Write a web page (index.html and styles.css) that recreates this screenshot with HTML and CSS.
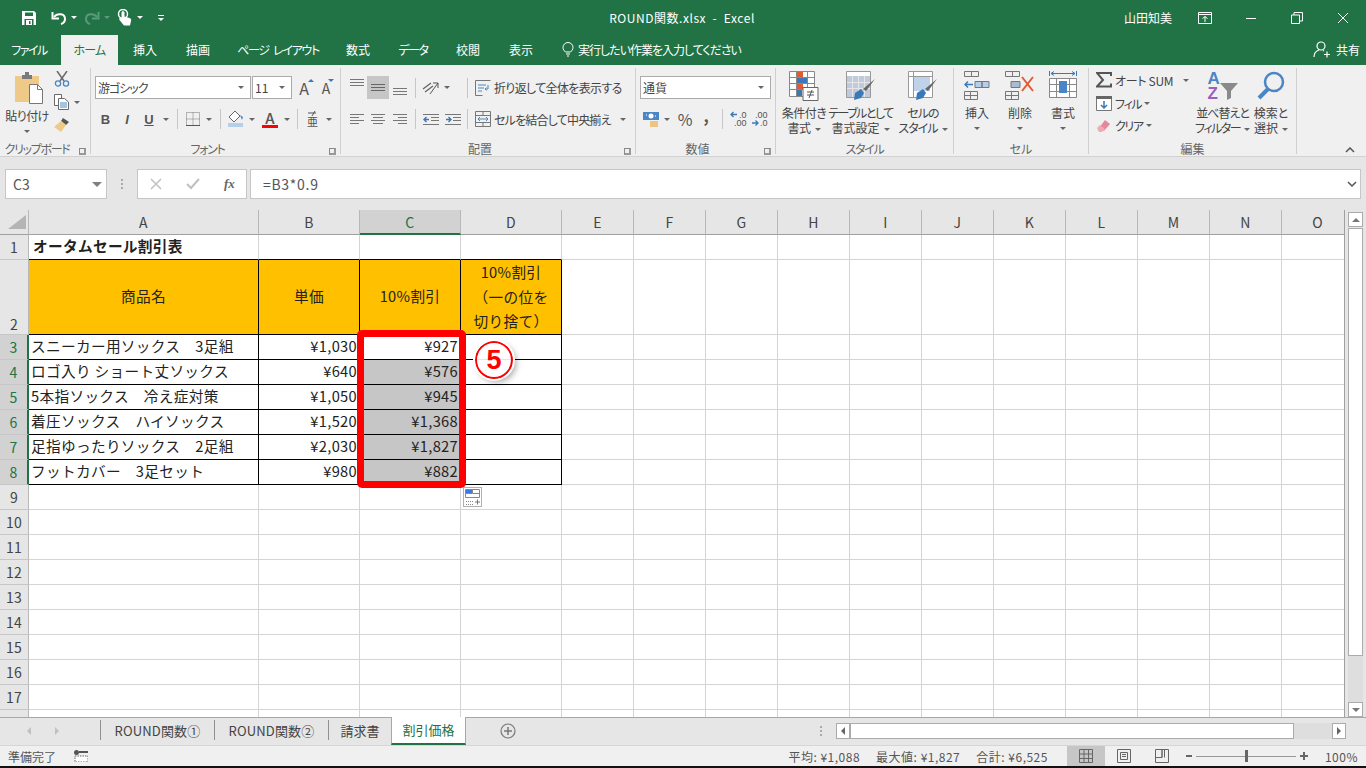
FILE: index.html
```html
<!DOCTYPE html>
<html lang="ja">
<head>
<meta charset="utf-8">
<title>ROUND関数.xlsx - Excel</title>
<link rel="stylesheet" href="styles.css">
</head>
<body>
<div class="app">

<header class="titlebar">
  <div class="qat">
    <svg class="i w16" viewBox="0 0 16 16"><path d="M1 1h12l2 2v12H1z" fill="#fff"/><path d="M4 2.500h8v3.500H4zM3.500 9h9v6h-9z" fill="#217346"/><path d="M5 10h6v5H5z" fill="#fff"/><path d="M8 11h1.500v3H8z" fill="#217346"/></svg>
    <span class="s w14"></span>
    <svg class="i w16" viewBox="0 0 16 16"><path d="M3 7c3-4 11-4 11 2 0 2-1 4-4 5" fill="none" stroke="#fff" stroke-width="2"/><path d="M1.500 2v6.500H8" fill="none" stroke="#fff" stroke-width="2"/></svg>
    <span class="s w14"><i class="car wh"></i></span>
    <svg class="i w16 ml3" viewBox="0 0 16 16"><path d="M13 7C10 3 2 3 2 9c0 2 1 4 4 5" fill="none" stroke="#5c9a7c" stroke-width="2"/><path d="M14.500 2v6.500H8" fill="none" stroke="#5c9a7c" stroke-width="2"/></svg>
    <span class="s w14"><i class="car dim"></i></span>
    <svg class="i w16 ml3" viewBox="0 0 16 18"><circle cx="6" cy="5" r="4.500" fill="none" stroke="#fff" stroke-width="1.500"/><path d="M4.500 3.500c0-1.800 3-1.800 3 0v4l5 1.500c1.500.5 2 1.500 1.500 3l-1 4.500H7L2.500 11c-1-1.500.5-2.500 2-1.500z" fill="#fff"/></svg>
    <span class="s w14"><i class="car wh"></i></span>
    <span class="s w10"></span>
    <span class="s w8 cust"><i class="cust-bar"></i><i class="car wh"></i></span>
  </div>
  <div class="doc">ROUND関数.xlsx &nbsp;-&nbsp; Excel</div>
  <div class="winctl">
    <span class="user">山田知美</span>
    <span class="wb"><svg class="i w14" viewBox="0 0 14 12"><path d="M.5.500h13v11H.500zM.5 2.500h13" fill="none" stroke="#fff"/><path d="M7 10V4.500M4.500 6.500 7 4.500l2.500 2" fill="none" stroke="#fff"/></svg></span>
    <span class="wb"><svg class="i w12" viewBox="0 0 12 12"><path d="M1 6.500h10" stroke="#fff"/></svg></span>
    <span class="wb"><svg class="i w12" viewBox="0 0 12 12"><path d="M.5 3h8v8.500h-8zM3 3V.5h8.500V9H8.500" fill="none" stroke="#fff"/></svg></span>
    <span class="wb"><svg class="i w12" viewBox="0 0 12 12"><path d="M1 1l10 10M11 1 1 11" stroke="#fff"/></svg></span>
  </div>
</header>

<nav class="tabs">
  <span class="tab t1 ls15">ファイル</span>
  <span class="tab t2 on ls08">ホーム</span>
  <span class="tab t3">挿入</span>
  <span class="tab t4">描画</span>
  <span class="tab t5 ls13 wsp">ページ レイアウト</span>
  <span class="tab t6">数式</span>
  <span class="tab t7 ls15">データ</span>
  <span class="tab t8">校閲</span>
  <span class="tab t9">表示</span>
  <span class="tell">
    <svg class="i w12" viewBox="0 0 12 15"><path d="M3.500 10C2 8.500 1 7.500 1 5.500a5 5 0 0 1 10 0c0 2-1 3-2.500 4.500zM4 12h4M5 14h2" fill="none" stroke="#fff"/></svg>
    <span class="ls1">実行したい作業を入力してください</span>
  </span>
  <span class="share">
    <svg class="i w18" viewBox="0 0 18 17"><circle cx="8" cy="5" r="4" fill="none" stroke="#fff" stroke-width="1.200"/><path d="M1 16c0-4 2-6 5-7M10 9.500l1 .5M11 13.500h6M14 10.500v6" fill="none" stroke="#fff" stroke-width="1.200"/></svg>
    共有
  </span>
</nav>

<section class="ribbon">

  <div class="group g-clip">
    <div class="gbody row">
      <div class="bigcol paste">
        <svg class="i w28 nudge" viewBox="0 0 28 32"><path d="M0 4h24v26H0z" fill="#efc987"/><path d="M7 3h3V0h4v3h3v4H7z" fill="#7a7a7a"/><path d="M14.500 12.500h8l5 5v14h-13z" fill="#fff" stroke="#777"/><path d="M22.500 12.500v5h5" fill="none" stroke="#777"/></svg>
        <span class="lbl l-paste ls05">貼り付け</span>
        <i class="car"></i>
      </div>
      <div class="smallcol">
        <svg class="i w16" viewBox="0 0 16 16"><path d="M3 0l7 10M13 0 6 10" stroke="#6a6a6a" stroke-width="1.500"/><circle cx="4" cy="12.500" r="2.600" fill="none" stroke="#4a86c5" stroke-width="1.300"/><circle cx="12" cy="12.500" r="2.600" fill="none" stroke="#4a86c5" stroke-width="1.300"/></svg>
        <span class="row rowc"><svg class="i w16" viewBox="0 0 16 16"><path d="M.5.500h7v11h-7z" fill="#fff" stroke="#6a6a6a"/><path d="M4.500 4.500h6l4 3.500v7.500h-10z" fill="#fff" stroke="#6a6a6a"/><path d="M6 9h7M6 11h7M6 13h7" stroke="#4a86c5"/></svg><span class="s w10 ml2"><i class="car"></i></span></span>
        <svg class="i w16" viewBox="0 0 16 16"><path d="M9 1l6 4-3 3-5-4z" fill="#555"/><path d="M7 4l5 4-5 7-7-5z" fill="#efc987"/></svg>
      </div>
    </div>
    <div class="glabel gl16"><span class="ls13">クリップボード</span><i class="launch"></i></div>
  </div>

  <div class="group g-font">
    <div class="gbody">
      <div class="r r1">
        <span class="select w157"><span class="ls1">游ゴシック</span><i class="car"></i></span>
        <span class="select w40 ml1">11<i class="car"></i></span>
        <span class="s w24 glyph big">A<i class="up"></i></span>
        <span class="s w20 glyph mid">A<i class="dn"></i></span>
      </div>
      <div class="r r2">
        <span class="s w21 bt b">B</span>
        <span class="s w22 bt it">I</span>
        <span class="s w22 bt un">U</span>
        <span class="s w12"><i class="car"></i></span>
        <span class="s w10"><i class="div"></i></span>
        <span class="s w22"><svg class="i w14" viewBox="0 0 14 14"><path d="M.5.500h13v13H.500zM7 .5v13M.5 7h13" fill="none" stroke="#777" stroke-dasharray="1 1"/><path d="M0 13.500h14" stroke="#555"/></svg></span>
        <span class="s w10"><i class="car"></i></span>
        <span class="s w12"><i class="div"></i></span>
        <span class="s w20"><svg class="i w18" viewBox="0 0 18 16"><path d="M8 0 2 6l5 5 6-6z" fill="#fff" stroke="#666"/><path d="M13 4l3 2-1 3z" fill="#4a86c5"/><path d="M1 12h15v4H1z" fill="#b5cfea"/></svg></span>
        <span class="s w12"><i class="car"></i></span>
        <span class="s w24 fcolor">A<i class="redbar"></i></span>
        <span class="s w10"><i class="car"></i></span>
        <span class="s w10"><i class="div"></i></span>
        <span class="s w22"><svg class="i w12" viewBox="0 0 12 18"><path d="M1 3h8M8 1 5 6" fill="none" stroke="#555"/><text x="0" y="16" class="tinytext">亜</text></svg></span>
        <span class="s w10"><i class="car"></i></span>
      </div>
    </div>
    <div class="glabel gl16"><span class="ls13">フォント</span><i class="launch"></i></div>
  </div>

  <div class="group g-align">
    <div class="gbody">
      <div class="r r1">
        <span class="s w20 al-top"><svg class="i w14" viewBox="0 0 14 8"><path d="M0 .5h14M0 3.500h14M0 6.500h14" stroke="#777"/></svg></span>
        <span class="s w22 pressed"><svg class="i w14" viewBox="0 0 14 8"><path d="M0 .5h14M0 3.500h14M0 6.500h14" stroke="#666"/></svg></span>
        <span class="s w22 al-bot"><svg class="i w14" viewBox="0 0 14 8"><path d="M0 .5h14M0 3.500h14M0 6.500h14" stroke="#777"/></svg></span>
        <span class="s w8"><i class="div"></i></span>
        <span class="s w24"><svg class="i w18" viewBox="0 0 18 16"><path d="M1 9l8-6M3 12l8-6" stroke="#666" stroke-width="1.300"/><path d="M8 14l8-11M11 3h5v5" fill="none" stroke="#555"/></svg></span>
        <span class="s w8"><i class="car"></i></span>
        <span class="s w16"></span><i class="div"></i><span class="s w7"></span>
        <svg class="i w16" viewBox="0 0 16 16"><path d="M.5.500h15M.5 15.500h7M.5.500v15" fill="none" stroke="#777"/><path d="M3 5h8M3 8h6M3 11h4" stroke="#4a86c5"/><path d="M13 5v4h-3M11.500 7.500 10 9l1.500 1.500" fill="none" stroke="#4a86c5"/></svg>
        <span class="lbl ml3 ls065">折り返して全体を表示する</span>
      </div>
      <div class="r r2">
        <span class="s w20"><svg class="i w14" viewBox="0 0 14 11"><path d="M0 .5h14M0 3.500h9M0 6.500h14M0 9.500h9" stroke="#777"/></svg></span>
        <span class="s w22"><svg class="i w14" viewBox="0 0 14 11"><path d="M0 .5h14M2 3.500h10M0 6.500h14M2 9.500h10" stroke="#777"/></svg></span>
        <span class="s w22"><svg class="i w14" viewBox="0 0 14 11"><path d="M0 .5h14M5 3.500h9M0 6.500h14M5 9.500h9" stroke="#777"/></svg></span>
        <span class="s w8"><i class="div"></i></span>
        <span class="s w24"><svg class="i w16" viewBox="0 0 16 11"><path d="M0 .5h16M8 3.500h8M8 6.500h8M0 10.500h16" stroke="#777"/><path d="M6 5.500H1M3.500 3 1 5.500 3.500 8" fill="none" stroke="#3b78b8" stroke-width="1.400"/></svg></span>
        <span class="s w20"><svg class="i w16" viewBox="0 0 16 11"><path d="M0 .5h16M8 3.500h8M8 6.500h8M0 10.500h16" stroke="#777"/><path d="M1 5.500h5M3.500 3 6 5.500 3.500 8" fill="none" stroke="#3b78b8" stroke-width="1.400"/></svg></span>
        <span class="s w4"></span><i class="div"></i><span class="s w7"></span>
        <svg class="i w16" viewBox="0 0 16 16"><path d="M.5.500h15v15H.500zM.5 4.500h15M.5 11.500h15M8 .5v4M8 11.500v4" fill="none" stroke="#777"/><path d="M3 8h10M5 6 3 8l2 2M11 6l2 2-2 2" fill="none" stroke="#4a86c5"/></svg>
        <span class="lbl ml3 mw116 ls08">セルを結合して中央揃え</span>
        <span class="s w24"><i class="car"></i></span>
      </div>
    </div>
    <div class="glabel gl16">配置<i class="launch"></i></div>
  </div>

  <div class="group g-num">
    <div class="gbody">
      <div class="r r1">
        <span class="select w131">通貨<i class="car"></i></span>
      </div>
      <div class="r r2">
        <span class="s w22"><svg class="i w16" viewBox="0 0 16 16"><path d="M0 1h16v8H0z" fill="#4a86c5"/><circle cx="8" cy="5" r="2.500" fill="#fff"/><path d="M3 4h1M12 5h1" stroke="#fff"/><path d="M7 11h8M7 13h8M7 15h8" stroke="#e9b65c" stroke-width="1.400"/></svg></span>
        <span class="s w10"><i class="car"></i></span>
        <span class="s w26 pct">%</span>
        <span class="s w16 comma">,</span>
        <span class="s w8"></span><i class="div"></i><span class="s w6"></span>
        <span class="s w22 dec"><svg class="i w20" viewBox="0 0 20 16"><path d="M7 3.500H1M3.500 1 1 3.500 3.500 6" fill="none" stroke="#3b78b8" stroke-width="1.300"/><text x="9" y="7" class="dectext">.0</text><text x="4" y="15" class="dectext">.00</text></svg></span>
        <span class="s w20 dec"><svg class="i w20" viewBox="0 0 20 16"><text x="4" y="7" class="dectext">.00</text><path d="M1 12h6M4.500 9.500 7 12l-2.500 2.500" fill="none" stroke="#3b78b8" stroke-width="1.300"/><text x="9" y="15" class="dectext">.0</text></svg></span>
      </div>
    </div>
    <div class="glabel gl16">数値<i class="launch"></i></div>
  </div>

  <div class="group g-style">
    <div class="gbody row">
      <div class="bigcol c56">
        <svg class="i w30" viewBox="0 0 30 30"><path d="M.5.500h25v25H.500zM.5 6.500h25M.5 12.500h25M.5 18.500h25M7.500.5v25M18.500.5v25" fill="#fff" stroke="#888"/><path d="M8 1h6v5H8zM8 13h6v5H8z" fill="#e15a32"/><path d="M8 7h10v5H8z" fill="#3b78b8"/><path d="M8 19h5v6H8z" fill="#3b78b8"/><path d="M14 16.500h15v13H14z" fill="#fff" stroke="#666"/><path d="M18 21h7M18 24h7M23 19l-3 8" stroke="#555" fill="none"/></svg>
        <span class="lbl2 ls05">条件付き<br>書式<i class="car il"></i></span>
      </div>
      <div class="bigcol c57">
        <svg class="i w30" viewBox="0 0 30 30"><path d="M.5.500h24v26H.500z" fill="#fff" stroke="#999"/><path d="M1 5h23v21H1z" fill="#bfcbdc"/><path d="M6.500 5v21M12.500 5v21M18.500 5v21M1 11.500h23M1 17.500h23" stroke="#e6e6e6"/><path d="M29 8l-9 12 -3-2z" fill="#666"/><path d="M8 29l1-7 6-4 3 4-3 5z" fill="#3b78b8"/></svg>
        <span class="lbl2"><span class="ls15">テーブルとして</span><br>書式設定<i class="car il"></i></span>
      </div>
      <div class="bigcol c68">
        <svg class="i w30" viewBox="0 0 30 30"><path d="M.5.500h24v26H.500zM.5 5.500h24M5.500.5v26" fill="#fff" stroke="#999"/><path d="M6 6h16v14H6z" fill="#bed2e9"/><path d="M29 8l-9 12-3-2z" fill="#666"/><path d="M8 29l1-7 6-4 3 4-3 5z" fill="#3b78b8"/></svg>
        <span class="lbl2 ls1">セルの<br>スタイル<i class="car il"></i></span>
      </div>
    </div>
    <div class="glabel"><span class="ls13">スタイル</span></div>
  </div>

  <div class="group g-cell">
    <div class="gbody row">
      <div class="bigcol c46">
        <svg class="i w26" viewBox="0 0 26 30"><path d="M.5.500h7v5h-7zM7.500.5h7v5h-7zM.5 20.500h6v8h-6zM6.500 20.500h7v8h-7zM.5 24.500h13" fill="none" stroke="#777"/><path d="M11 10.500h7v6h-7zM18 10.500h7v6h-7z" fill="#b5cfea" stroke="#777"/><path d="M9 13.500H1M4 10.500l-3 3 3 3" fill="none" stroke="#3b78b8" stroke-width="1.400"/></svg>
        <span class="lbl2">挿入</span><i class="car cb"></i>
      </div>
      <div class="bigcol c40">
        <svg class="i w30" viewBox="0 0 30 30"><path d="M.5.500h7v5h-7zM7.500.5h7v5h-7zM.5 20.500h6v8h-6zM6.500 20.500h7v8h-7zM.5 24.500h13" fill="none" stroke="#777"/><path d="M6 10.500h9v6H6z" fill="#a9bbd0" stroke="#777"/><path d="M17 6l11 14M28 6 17 20" stroke="#e15a32" stroke-width="2"/></svg>
        <span class="lbl2">削除</span><i class="car cb"></i>
      </div>
      <div class="bigcol c46">
        <svg class="i w28" viewBox="0 0 28 30"><path d="M.5 0v5M27.500 0v5M2 2.500h24M5 .5l-3 2 3 2M23 .5l3 2-3 2" fill="none" stroke="#3b78b8"/><path d="M.5 7.500h27v19H.500zM7.500 7.500v19M20.500 7.500v19M.5 13.500h27M.5 20.500h27" fill="#fff" stroke="#888"/><path d="M10 10h8v12h-8z" fill="#4a86c5"/></svg>
        <span class="lbl2">書式</span><i class="car cb"></i>
      </div>
    </div>
    <div class="glabel">セル</div>
  </div>

  <div class="group g-edit">
    <div class="gbody row">
      <div class="editlist">
        <div class="r er"><svg class="i w16" viewBox="0 0 16 16"><path d="M15 4V1H1l6 7-6 6.500h14v-3" fill="none" stroke="#555" stroke-width="2"/></svg><span class="lbl w58 ml3 ls03">オート SUM</span><span class="s w26"><i class="car"></i></span></div>
        <div class="r er"><svg class="i w16" viewBox="0 0 16 15"><path d="M.5.500h15v14H.500z" fill="#fff" stroke="#777"/><path d="M0 0h16v3H0z" fill="#666"/><path d="M8 5v7M5 9l3 3 3-3" fill="none" stroke="#3b78b8" stroke-width="1.500"/></svg><span class="lbl ml3 ls13">フィル</span><span class="s w12"><i class="car"></i></span></div>
        <div class="r er"><svg class="i w16" viewBox="0 0 16 14"><path d="M9 1l5 4-6 7-5-3z" fill="#e7879a"/><path d="M1 9l3-3 5 4-3 3H3z" fill="#f1a9b6"/></svg><span class="lbl ml3 ls13">クリア</span><span class="s w12"><i class="car"></i></span></div>
      </div>
      <div class="bigcol c53">
        <span class="sortic">
          <span class="sortletters"><span class="sa">A</span><span class="sz">Z</span></span>
          <svg class="i w18 funnel" viewBox="0 0 18 17"><path d="M0 0h18l-7 8v7l-4 2V8z" fill="#8a8a8a"/></svg>
        </span>
        <span class="lbl2"><span class="ls1">並べ替えと</span><br><span class="ls15">フィルター</span><i class="car il"></i></span>
      </div>
      <div class="bigcol c44">
        <svg class="i w30" viewBox="0 0 30 30"><circle cx="18" cy="11" r="9" fill="none" stroke="#4a86c5" stroke-width="2.500"/><path d="M12 18 3 27" stroke="#4a86c5" stroke-width="4"/></svg>
        <span class="lbl2">検索と<br>選択<i class="car il"></i></span>
      </div>
    </div>
    <div class="glabel">編集</div>
  </div>

  <span class="collapse"><svg class="i w10" viewBox="0 0 10 6"><path d="M1 5l4-4 4 4" fill="none" stroke="#555" stroke-width="1.500"/></svg></span>
</section>

<section class="fbar">
  <div class="namebox">C3<i class="car big"></i></div>
  <span class="vdots"></span>
  <div class="fxbox">
    <svg class="i w12" viewBox="0 0 12 12"><path d="M1 1l10 10M11 1 1 11" stroke="#c0c0c0" stroke-width="1.500"/></svg>
    <svg class="i w14" viewBox="0 0 14 12"><path d="M1 6l4 4 8-9" fill="none" stroke="#c0c0c0" stroke-width="2"/></svg>
    <span class="fx">fx</span>
  </div>
  <div class="formula"><span>=B3*0.9</span><svg class="i w10" viewBox="0 0 10 6"><path d="M1 1l4 4 4-4" fill="none" stroke="#555" stroke-width="1.500"/></svg></div>
</section>

<section class="sheetwrap">
  <div class="sheet">
    <table class="grid">
      <colgroup><col class="ch"><col class="ca"><col class="cb1"><col class="cb1"><col class="cb1"><col class="ce"><col class="ce"><col class="ce"><col class="ce"><col class="ce"><col class="ce"><col class="ce"><col class="ce"><col class="ce"><col class="ce"><col class="ce"></colgroup>
      <tr class="hr"><th class="corner"><svg class="i w18" viewBox="0 0 18 14"><path d="M18 0v14H0z" fill="#b4b4b4"/></svg></th><th>A</th><th>B</th><th class="hsel">C</th><th>D</th><th>E</th><th>F</th><th>G</th><th>H</th><th>I</th><th>J</th><th>K</th><th>L</th><th>M</th><th>N</th><th>O</th></tr>
      <tr><th class="rh">1</th><td class="kb bold">オータムセール割引表</td><td class="kb"></td><td class="kb"></td><td class="kb"></td><td></td><td></td><td></td><td></td><td></td><td></td><td></td><td></td><td></td><td></td><td></td></tr>
      <tr class="r75"><th class="rh bot">2</th><td class="k or ctr">商品名</td><td class="k or ctr">単価</td><td class="k or ctr">10%割引</td><td class="k or ctr tall">10%割引<br>（一の位を<br>切り捨て）</td><td></td><td></td><td></td><td></td><td></td><td></td><td></td><td></td><td></td><td></td><td></td></tr>
      <tr><th class="rh sel">3</th><td class="k">スニーカー用ソックス　3足組</td><td class="k num">¥1,030</td><td class="k num">¥927</td><td class="k"></td><td></td><td></td><td></td><td></td><td></td><td></td><td></td><td></td><td></td><td></td><td></td></tr>
      <tr><th class="rh sel">4</th><td class="k">ロゴ入り ショート丈ソックス</td><td class="k num">¥640</td><td class="k num gy">¥576</td><td class="k"></td><td></td><td></td><td></td><td></td><td></td><td></td><td></td><td></td><td></td><td></td><td></td></tr>
      <tr><th class="rh sel">5</th><td class="k">5本指ソックス　冷え症対策</td><td class="k num">¥1,050</td><td class="k num gy">¥945</td><td class="k"></td><td></td><td></td><td></td><td></td><td></td><td></td><td></td><td></td><td></td><td></td><td></td></tr>
      <tr><th class="rh sel">6</th><td class="k">着圧ソックス　ハイソックス</td><td class="k num">¥1,520</td><td class="k num gy">¥1,368</td><td class="k"></td><td></td><td></td><td></td><td></td><td></td><td></td><td></td><td></td><td></td><td></td><td></td></tr>
      <tr><th class="rh sel">7</th><td class="k">足指ゆったりソックス　2足組</td><td class="k num">¥2,030</td><td class="k num gy">¥1,827</td><td class="k"></td><td></td><td></td><td></td><td></td><td></td><td></td><td></td><td></td><td></td><td></td><td></td></tr>
      <tr><th class="rh sel">8</th><td class="k">フットカバー　3足セット</td><td class="k num">¥980</td><td class="k num gy">¥882</td><td class="k"></td><td></td><td></td><td></td><td></td><td></td><td></td><td></td><td></td><td></td><td></td><td></td></tr>
      <tr><th class="rh">9</th><td></td><td></td><td></td><td></td><td></td><td></td><td></td><td></td><td></td><td></td><td></td><td></td><td></td><td></td><td></td></tr>
      <tr><th class="rh">10</th><td></td><td></td><td></td><td></td><td></td><td></td><td></td><td></td><td></td><td></td><td></td><td></td><td></td><td></td><td></td></tr>
      <tr><th class="rh">11</th><td></td><td></td><td></td><td></td><td></td><td></td><td></td><td></td><td></td><td></td><td></td><td></td><td></td><td></td><td></td></tr>
      <tr><th class="rh">12</th><td></td><td></td><td></td><td></td><td></td><td></td><td></td><td></td><td></td><td></td><td></td><td></td><td></td><td></td><td></td></tr>
      <tr><th class="rh">13</th><td></td><td></td><td></td><td></td><td></td><td></td><td></td><td></td><td></td><td></td><td></td><td></td><td></td><td></td><td></td></tr>
      <tr><th class="rh">14</th><td></td><td></td><td></td><td></td><td></td><td></td><td></td><td></td><td></td><td></td><td></td><td></td><td></td><td></td><td></td></tr>
      <tr><th class="rh">15</th><td></td><td></td><td></td><td></td><td></td><td></td><td></td><td></td><td></td><td></td><td></td><td></td><td></td><td></td><td></td></tr>
      <tr><th class="rh">16</th><td></td><td></td><td></td><td></td><td></td><td></td><td></td><td></td><td></td><td></td><td></td><td></td><td></td><td></td><td></td></tr>
      <tr><th class="rh">17</th><td></td><td></td><td></td><td></td><td></td><td></td><td></td><td></td><td></td><td></td><td></td><td></td><td></td><td></td><td></td></tr>
      <tr><th class="rh">18</th><td></td><td></td><td></td><td></td><td></td><td></td><td></td><td></td><td></td><td></td><td></td><td></td><td></td><td></td><td></td></tr>
    </table>
    <div class="redbox"></div>
    <div class="badge">5</div>
    <div class="pasteopt"><svg class="i w16" viewBox="0 0 16 16"><path d="M.5.500h14v8H.500z" fill="#fff" stroke="#888"/><path d="M1 1h6v3.500H1z" fill="#3b78e0"/><path d="M7.500.5v4h7M.5 4.500h7" fill="none" stroke="#888"/><path d="M1 12.500h8M1 15.500h8" stroke="#888" stroke-dasharray="1 1"/><path d="M10 13h5M12.500 10.500v5" stroke="#777"/></svg></div>
  </div>
  <aside class="vscroll">
    <span class="sbtn"><i class="tri-up"></i></span>
    <span class="vthumb"></span>
    <span class="vrest"></span>
    <span class="sbtn"><i class="tri-dn"></i></span>
  </aside>
</section>

<section class="sheettabs">
  <span class="nav"><i class="tl"></i></span><span class="nav n2"><i class="tr"></i></span>
  <span class="st sep st1">ROUND関数①</span>
  <span class="st sep st2">ROUND関数②</span>
  <span class="st sep st3">請求書</span>
  <span class="st active">割引価格</span>
  <span class="plus"><svg class="i w16" viewBox="0 0 16 16"><circle cx="8" cy="8" r="7" fill="none" stroke="#777" stroke-width="1.200"/><path d="M4 8h8M8 4v8" stroke="#777" stroke-width="1.500"/></svg></span>
  <span class="vdots hd"></span>
  <div class="hscroll">
    <span class="hbtn"><i class="tl dk"></i></span>
    <span class="hthumb"></span>
    <span class="hrest"></span>
    <span class="hbtn"><i class="tr dk"></i></span>
  </div>
</section>

<footer class="status">
  <span class="ready">準備完了</span>
  <svg class="i w14 macro" viewBox="0 0 14 12"><circle cx="2.500" cy="2.500" r="2.500" fill="#555"/><path d="M5 1h9v2H5z" fill="#555"/><path d="M1 6h13v6H1z" fill="#fff" stroke="#666" stroke-dasharray="1.500 1"/></svg>
  <span class="stats">
    <span>平均: ¥1,088</span><span>最大値: ¥1,827</span><span>合計: ¥6,525</span>
  </span>
  <span class="view on"><svg class="i w14" viewBox="0 0 14 14"><path d="M.5.500h13v13H.500zM5 .5v13M9.500.5v13M.5 5h13M.5 9.500h13" fill="none" stroke="#666"/></svg></span>
  <span class="view"><svg class="i w14" viewBox="0 0 14 14"><path d="M.5.500h13v13H.500z" fill="none" stroke="#666"/><path d="M3.500 3.500h7v7h-7zM5 5.500h4M5 7.500h4" fill="none" stroke="#666"/></svg></span>
  <span class="view"><svg class="i w14" viewBox="0 0 14 14"><path d="M.5.500h13v13H.500zM.5 8.500h6.500V.5M7 8.500V.5M9.500.5v8" fill="none" stroke="#666"/></svg></span>
  <span class="zoom">
    <i class="zm"></i>
    <span class="slider"><i class="thumb"></i></span>
    <i class="zp"></i>
  </span>
  <span class="pctz">100%</span>
</footer>
<div class="edge"></div>
</div>
</body>
</html>
```
FILE: styles.css
```css
* { box-sizing: border-box; }
html, body { margin: 0; padding: 0; }
body { width: 1366px; height: 768px; overflow: hidden; background: #000;
  font-family: "Noto Sans CJK JP", "Noto Sans", sans-serif; font-size: 12px; color: #444;
  font-feature-settings: "palt"; }
.app { display: flex; flex-direction: column; width: 1366px; height: 768px; }
.i { display: block; flex: none; height: auto; }
i { font-style: normal; display: block; }
.row { display: flex; }
.rowc { align-items: center; }
.w4{width:4px}.w6{width:6px}.w7{width:7px}.w8{width:8px}.w10{width:10px}.w12{width:12px}.w14{width:14px}.w16{width:16px}.w18{width:18px}.w20{width:20px}.w21{width:21px}.w22{width:22px}.w24{width:24px}.w26{width:26px}.w28{width:28px}.w30{width:30px}.w58{width:58px}
.ml1{margin-left:1px}.ml2{margin-left:2px}.ml3{margin-left:3px}
.ls03{letter-spacing:-.3px}.ls05{letter-spacing:-.5px}.ls065{letter-spacing:-.65px}.ls08{letter-spacing:-.8px}.ls1{letter-spacing:-1px}.ls13{letter-spacing:-1.3px}.ls15{letter-spacing:-1.5px}
.wsp { word-spacing: 3px; }
.s { display: flex; align-items: center; justify-content: center; flex: none; height: 100%; }

.car { width: 0; height: 0; border-left: 3px solid transparent; border-right: 3px solid transparent; border-top: 3px solid #666; flex: none; }
.car.wh { border-top-color: #fff; }
.car.dim { border-top-color: #5c9a7c; }
.car.big { border-left-width: 5px; border-right-width: 5px; border-top-width: 5px; border-top-color: #808080; }
.div { width: 1px; height: 20px; background: #c6c6c6; flex: none; }

/* title bar */
.titlebar { height: 35px; background: #217346; color: #fff; display: flex; align-items: center; flex: none; position: relative; }
.qat { display: flex; align-items: center; height: 16px; padding-left: 21px; width: 560px; flex: none; }
.cust { flex-direction: column; gap: 2px; }
.cust-bar { width: 6px; height: 1px; background: #fff; }
.doc { width: 240px; text-align: center; font-size: 12px; margin-left: 2px; white-space: nowrap; letter-spacing: .55px; }
.winctl { margin-left: auto; display: flex; align-items: center; }
.user { font-size: 12px; margin-right: 10px; }
.wb { display: flex; justify-content: center; height: 30px; align-items: center; width: 46px; }

/* tabs */
.tabs { height: 30px; background: #217346; color: #fff; display: flex; align-items: stretch; flex: none; font-size: 12px; }
.tab { display: flex; align-items: center; justify-content: center; white-space: nowrap; padding-bottom: 2px; }
.tab.on { background: #f0f0f0; color: #217346; }
.t1{width:58px;margin-right:3px}.t2{width:57px}.t3{width:54px}.t4{width:52px}.t5{width:108px}.t6{width:52px}.t7{width:58px}.t8{width:52px}.t9{width:54px}
.tell { display: flex; align-items: center; gap: 4px; margin-left: 14px; padding-bottom: 2px; }
.share { margin-left: auto; display: flex; align-items: center; gap: 5px; padding-right: 6px; padding-bottom: 2px; }

/* ribbon */
.ribbon { height: 92px; background: #f0f0f0; border-bottom: 1px solid #d2d2d2; display: flex; flex: none; padding-top: 3px; }
.group { position: relative; border-right: 1px solid #cfcfcf; display: flex; flex-direction: column; height: 86px; flex: none; }
.g-clip{width:91px}.g-font{width:250px}.g-align{width:295px}.g-num{width:140px}.g-style{width:178px}.g-cell{width:135px}.g-edit{width:208px}
.gbody { height: 69px; flex: none; }
.glabel { height: 17px; text-align: center; font-size: 12px; line-height: 24px; color: #666; position: relative; flex: none; }
.gl16 { padding-right: 16px; }
.launch { position: absolute; right: 4px; bottom: -1px; width: 7px; height: 7px; border-left: 1px solid #888; border-top: 1px solid #888; border-right: 2px solid #999; border-bottom: 2px solid #999; }
.r { display: flex; align-items: center; white-space: nowrap; }
.r1 { height: 23px; margin-top: 8px; }
.r2 { height: 22px; margin-top: 9px; }
.g-font .r, .g-num .r { margin-left: 4px; }
.g-align .r { margin-left: 6px; }
.select { height: 23px; background: #fff; border: 1px solid #ababab; display: flex; align-items: center; justify-content: space-between; padding: 0 6px 0 2px; font-size: 12px; flex: none; }
.w157{width:156px}.w40{width:40px}.w131{width:131px}
.mw116 { width: 118px; }
.glyph { position: relative; color: #555; }
.glyph.big { font-size: 16px; }
.glyph.mid { font-size: 14px; }
.up, .dn { position: absolute; top: 3px; right: 2px; width: 0; height: 0; border-left: 3px solid transparent; border-right: 3px solid transparent; }
.up { border-bottom: 3px solid #3b78b8; }
.dn { border-top: 3px solid #3b78b8; }
.bt { font-family: "Liberation Sans", sans-serif; font-size: 13px; color: #555; }
.b { font-weight: bold; }
.it { font-style: italic; font-weight: bold; }
.un { font-weight: bold; text-decoration: underline; }
.fcolor { flex-direction: column; font-size: 15px; line-height: 13px; font-weight: 500; color: #555; justify-content: flex-start; padding-top: 3px; }
.redbar { width: 16px; height: 3px; background: #f00; margin-top: 1px; }
.tinytext { font-size: 11px; fill: #555; }
.dectext { font-size: 9px; fill: #555; font-family: "Liberation Sans", sans-serif; }
.sortic { display: flex; width: 30px; height: 30px; gap: 0; flex: none; }
.sortletters { display: flex; flex-direction: column; width: 12px; flex: none; font-family: "Liberation Sans", sans-serif; font-weight: bold; font-size: 17px; line-height: 15px; }
.sa { color: #4a86c5; }
.sz { color: #9b5fc0; }
.funnel { margin-top: 11px; }
.pressed { background: #c6c6c6; height: 23px; }
.al-top { align-items: flex-start; padding-top: 3px; }
.al-bot { align-items: flex-end; padding-bottom: 3px; }
.lbl { font-size: 12px; color: #444; white-space: nowrap; }
.pct { font-size: 16px; color: #555; }
.comma { font-size: 16px; font-weight: bold; color: #555; padding-bottom: 8px; }
.bigcol { display: flex; flex-direction: column; align-items: center; flex: none; padding-top: 3px; }
.paste { width: 42px; margin-left: 6px; padding-top: 4px; }
.nudge { margin-left: 4px; }
.l-paste { margin-top: 3px; line-height: 17px; }
.paste .car { margin-top: 6px; }
.smallcol { display: flex; flex-direction: column; gap: 7px; margin-left: 6px; padding-top: 3px; }
.c40{width:40px}.c44{width:44px}.c46{width:46px}.c53{width:53px}.c56{width:56px}.c57{width:57px}.c68{width:68px}
.lbl2 { font-size: 12px; line-height: 15px; text-align: center; margin-top: 4px; white-space: nowrap; }
.car.il { display: inline-block; vertical-align: middle; margin-left: 4px; }
.car.cb { margin-top: 7px; }
.editlist { width: 107px; padding-left: 7px; padding-top: 1px; display: flex; flex-direction: column; flex: none; }
.er { height: 23px; }
.er .s { height: 20px; }
.collapse { align-self: flex-end; margin-left: auto; margin-right: 11px; margin-bottom: 3px; }

/* formula bar */
.fbar { height: 53px; background: #e6e6e6; display: flex; align-items: flex-start; padding: 12px 5px 0; flex: none; }
.namebox { width: 102px; height: 30px; background: #fff; border: 1px solid #c6c6c6; display: flex; align-items: center; justify-content: space-between; padding: 0 4px 0 7px; font-size: 14px; color: #555; }
.vdots { width: 2px; height: 10px; margin: 10px 14px 0 14px; background: repeating-linear-gradient(#aaa 0 2px, transparent 2px 4px); }
.fxbox { width: 110px; height: 30px; background: #fff; border: 1px solid #c6c6c6; display: flex; align-items: center; gap: 24px; padding-left: 12px; }
.fx { font-family: "Liberation Serif", serif; font-style: italic; font-weight: bold; font-size: 13px; color: #666; }
.formula { width: 1111px; margin-left: 3px; height: 30px; background: #fff; border: 1px solid #c6c6c6; display: flex; align-items: center; justify-content: space-between; padding: 0 3px 0 12px; font-size: 14px; color: #555; letter-spacing: .7px; }

/* sheet */
.sheetwrap { height: 507px; display: flex; flex: none; background: #e6e6e6; }
.sheet { width: 1345px; height: 507px; overflow: hidden; position: relative; background: #fff; border-right: 1px solid #a0a0a0; flex: none; }
.grid { border-collapse: separate; border-spacing: 0; table-layout: fixed; width: 1354px; font-size: 14.67px; color: #222; font-feature-settings: normal; letter-spacing: .32px; }
.ch{width:29px}.ca{width:230px}.cb1{width:101px}.ce{width:72px}
.grid th, .grid td { height: 25px; padding: 0; border-right: 1px solid #d4d4d4; border-bottom: 1px solid #d4d4d4; white-space: nowrap; overflow: hidden; }
.grid td { padding: 0 0 2px 2px; line-height: 22px; }
.grid th { background: #e6e6e6; font-weight: 400; color: #444; font-size: 14px; line-height: 20px; border-right-color: #b8b8b8; border-bottom-color: #c6c6c6; }
.grid td.tall { line-height: 24.4px; padding-bottom: 0; }
.hr th { border-bottom: 1px solid #a0a0a0; }
.corner .i { margin-left: 8px; }
.hsel { background: #d2d2d2 !important; color: #217346 !important; border-bottom: 2px solid #217346 !important; }
.rh { border-right-color: #a8a8a8; }
.sel { background: #d2d2d2 !important; color: #217346 !important; border-right: 2px solid #217346 !important; }
.bot { vertical-align: bottom; }
.r75 th, .r75 td { height: 75px; }
.grid td.k { border-right-color: #000; border-bottom-color: #000; }
.grid td.kb { border-bottom-color: #000; }
.grid td.bold { font-weight: bold; padding-left: 4px; }
.or { background: #ffc000; }
.grid td.ctr { text-align: center; padding-left: 0; }
.grid td.num { text-align: right; padding: 0 2px 2px 0; }
.gy { background: #c6c6c6; }
.redbox { position: absolute; left: 357px; top: 120px; width: 109px; height: 158px; border: 7px solid #f00; border-radius: 5px; }
.badge { position: absolute; left: 475px; top: 131px; width: 38px; height: 38px; border-radius: 50%; background: rgba(255,255,255,.9); border: 2px solid #f00; outline: 2px solid #fff; box-shadow: 3px 3px 6px rgba(0,0,0,.35); color: #f00; font-family: "Liberation Sans", sans-serif; font-weight: bold; font-size: 27px; line-height: 34px; text-align: center; }
.pasteopt { position: absolute; left: 463px; top: 277px; width: 19px; height: 20px; background: #fff; border: 1px solid #b0b0b0; padding: 1px 0 0 1px; }
.vscroll { width: 21px; display: flex; flex-direction: column; padding: 2px 3px 0; background: #e6e6e6; flex: none; }
.sbtn { height: 15px; background: #fff; border: 1px solid #ababab; display: flex; align-items: center; justify-content: center; flex: none; }
.tri-up { width: 0; height: 0; border-left: 4px solid transparent; border-right: 4px solid transparent; border-bottom: 4px solid #777; }
.tri-dn { width: 0; height: 0; border-left: 4px solid transparent; border-right: 4px solid transparent; border-top: 4px solid #777; }
.vthumb { height: 428px; background: #fff; border: 1px solid #ababab; flex: none; margin-top: 1px; }
.vrest { flex: 1; background: #dedede; }

/* sheet tabs */
.sheettabs { height: 28px; background: #e6e6e6; border-top: 1px solid #a8a8a8; display: flex; align-items: stretch; flex: none; position: relative; font-size: 13px; color: #444; }
.nav { width: 28px; display: flex; align-items: center; justify-content: center; margin-left: 15px; padding-bottom: 2px; }
.nav.n2 { margin-left: 0; margin-right: 29px; }
.tl { width: 0; height: 0; border-top: 4px solid transparent; border-bottom: 4px solid transparent; border-right: 4px solid #c0c0c0; }
.tr { width: 0; height: 0; border-top: 4px solid transparent; border-bottom: 4px solid transparent; border-left: 4px solid #c0c0c0; }
.tl.dk { border-right-color: #666; }
.tr.dk { border-left-color: #666; }
.st { display: flex; align-items: center; justify-content: center; white-space: nowrap; }
.sep { position: relative; border-left: 1px solid #909090; height: 20px; align-self: center; margin-bottom: 3px; }
.st1, .st2 { width: 114px; letter-spacing: .15px; }
.st3 { width: 63px; }
.active { width: 75px; background: #fff; color: #217346; border-bottom: 2px solid #217346; margin-top: -1px; padding-bottom: 2px; border-left: 1px solid #a8a8a8; border-right: 1px solid #a8a8a8; }
.plus { display: flex; align-items: center; margin-left: 34px; padding-bottom: 2px; }
.vdots.hd { margin: 8px 14px 0 304px; }
.hscroll { display: flex; height: 16px; margin-top: 5px; width: 510px; }
.hbtn { width: 14px; background: #fff; border: 1px solid #ababab; display: flex; align-items: center; justify-content: center; flex: none; }
.hthumb { width: 444px; background: #fff; border: 1px solid #ababab; flex: none; }
.hrest { flex: 1; background: #dedede; }

/* status */
.status { height: 21px; background: #f0f0f0; border-top: 1px solid #d6d6d6; display: flex; align-items: center; flex: none; font-size: 12px; color: #555; }
.ready { margin-left: 8px; }
.macro { margin-left: 18px; }
.stats { display: flex; gap: 16px; margin-left: auto; margin-right: 19px; white-space: nowrap; letter-spacing: .5px; }
.view { width: 38px; height: 20px; display: flex; align-items: center; justify-content: center; }
.view.on { background: #c6c6c6; }
.zoom { display: flex; align-items: center; margin-left: 5px; width: 122px; flex: none; }
.zm { width: 6px; height: 2px; background: #666; margin-right: 4px; flex: none; }
.slider { width: 100px; height: 1px; background: #999; position: relative; flex: none; }
.thumb { position: absolute; left: 49px; top: -6px; width: 3px; height: 12px; background: #666; }
.zp { width: 8px; height: 8px; margin-left: 4px; flex: none; background: linear-gradient(#666,#666) center/8px 2px no-repeat, linear-gradient(#666,#666) center/2px 8px no-repeat; }
.pctz { margin-left: 17px; padding-right: 8px; white-space: nowrap; letter-spacing: .5px; }
.edge { height: 2px; background: #111; flex: none; }
```
